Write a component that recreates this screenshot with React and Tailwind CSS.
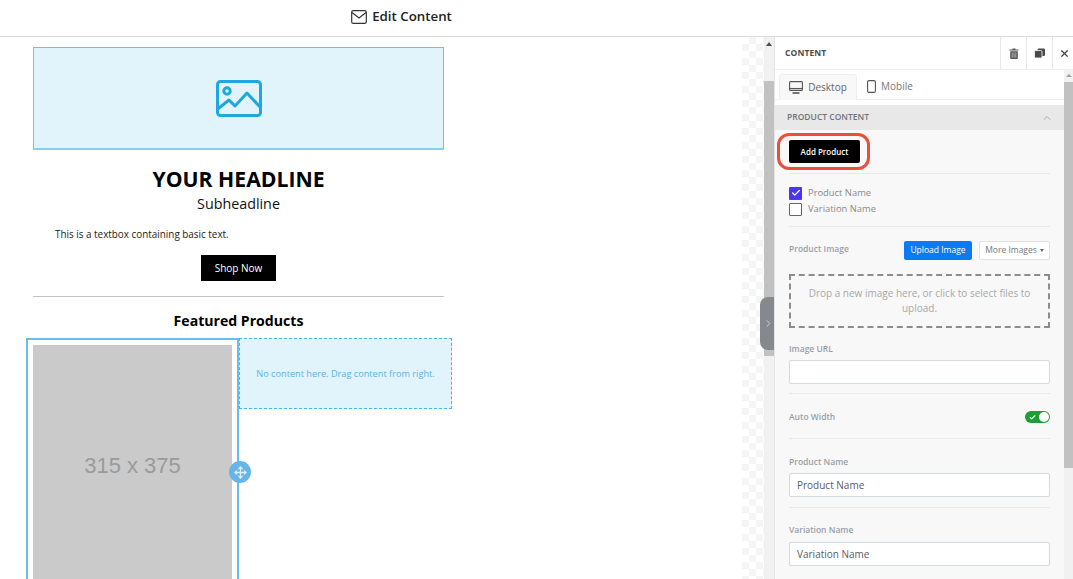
import React from "react";
import { Check, ChevronRight, ChevronUp, X, Move } from "lucide-react";

function Divider({ className = "" }) {
  return <div className={"h-px bg-[#e9e9e9] " + className} />;
}

function Label({ children, className = "" }) {
  return <div className={"text-[8.5px] leading-[12px] font-semibold text-[#9aa0a8] " + className}>{children}</div>;
}

function TextField({ value }) {
  return (
    <div className="h-[24px] bg-white border border-[#d5d9e0] rounded-[2px] px-[7px] flex items-center text-[10px] text-[#5a5a66]">
      {value}
    </div>
  );
}

function Canvas() {
  return (
    <div className="w-[742px] shrink-0 bg-white pt-[10px] pl-[33px] overflow-hidden">
      <div className="w-[411px] flex flex-col">
        <div className="h-[103px] bg-[#e1f3fb] border border-[#6cc3e8] border-b-2 border-b-[#86d0ee] flex items-center justify-center">
          <svg width="46" height="37" viewBox="0 0 46 37" fill="none" stroke="#1fa8de" strokeWidth="3" strokeLinejoin="round" strokeLinecap="round">
            <rect x="1.5" y="1.5" width="43" height="34" rx="3" />
            <circle cx="11" cy="11" r="3.2" />
            <path d="M3 28 L13 20 L19 26 L31 13 L44 27" />
          </svg>
        </div>
        <div className="mt-[14px] text-center text-[21.2px] leading-[30px] font-bold text-black">YOUR HEADLINE</div>
        <div className="text-center text-[14.3px] leading-[20px] text-[#111]">Subheadline</div>
        <div className="mt-[13px] pl-[22px] text-[9.9px] leading-[14px] text-[#222]">This is a textbox containing basic text.</div>
        <div className="mt-[14px] self-center w-[75px] h-[26px] bg-black text-white text-[10px] flex items-center justify-center">Shop Now</div>
        <div className="mt-[15px] h-px bg-[#c4c4c4]" />
        <div className="mt-[14px] text-center text-[14.1px] leading-[20px] font-bold text-black">Featured Products</div>
        <div className="mt-[7px] -ml-[7px] flex items-start w-[426px]">
          <div className="relative w-[213px] h-[260px] shrink-0 border-2 border-[#66bdee] border-b-0 pt-[5px] pl-[5px]">
            <div className="w-[199px] h-[400px] bg-[#cacaca] flex items-center justify-center text-[22px] text-[#9a9a9a] pb-[160px] font-['Liberation_Sans',sans-serif]">315 x 375</div>
            <div className="absolute left-[201px] top-[121px] w-[22px] h-[22px] rounded-full bg-[#66b5e6] flex items-center justify-center">
              <Move size={13} strokeWidth={2.4} color="#d8eefa" />
            </div>
          </div>
          <div className="w-[213px] h-[71px] bg-[#e1f3fb] border border-dashed border-[#3dbbec] flex items-center justify-center text-[9.2px] text-[#5cb4e4]">
            No content here. Drag content from right.
          </div>
        </div>
      </div>
    </div>
  );
}

function Gutter() {
  return (
    <div className="relative w-[32px] shrink-0 flex">
      <div className="w-[22px] bg-[repeating-conic-gradient(#f5f5f5_0_25%,#ffffff_0_50%)] bg-[length:14px_14px]" />
      <div className="w-[10px] bg-[#f1f1f1] flex flex-col">
        <div className="h-[44px] flex justify-center pt-[5px]">
          <svg width="6" height="4" viewBox="0 0 6 4"><path d="M0 4 L3 0 L6 4 Z" fill="#505050" /></svg>
        </div>
        <div className="h-[275px] bg-[#c1c1c1]" />
      </div>
      <div className="absolute left-[18px] top-[260px] w-[14px] h-[53px] bg-[#85888c] rounded-l-[8px] flex items-center justify-center pl-[3px]">
        <ChevronRight size={13} color="#d0d2d5" />
      </div>
    </div>
  );
}

function Panel() {
  return (
    <div className="relative flex-1 min-w-0 border-l border-[#e4e4e4] flex flex-col bg-white">
      <div className="h-[33px] shrink-0 flex items-center border-b border-[#eeeeee]">
        <div className="flex-1 pl-[10px] text-[8.5px] font-bold text-[#4d4d4d] tracking-[0.1px]">CONTENT</div>
        <div className="w-[26px] h-full border-l border-[#e8e8e8] flex items-center justify-center">
          <svg width="10" height="11" viewBox="0 0 10 11">
            <path d="M0.5 1.6H9.5V2.6H0.5Z M3.5 0.4H6.5V1.6H3.5Z" fill="#555" />
            <path d="M1.2 3.2H8.8V10.2Q8.8 11 8 11H2Q1.2 11 1.2 10.2Z" fill="#555" />
            <path d="M3.2 4.4V9.8 M5 4.4V9.8 M6.8 4.4V9.8" stroke="#d5d5d5" strokeWidth="0.7" />
          </svg>
        </div>
        <div className="w-[26px] h-full border-l border-[#e8e8e8] flex items-center justify-center">
          <svg width="11" height="11" viewBox="0 0 11 11"><rect x="3.5" y="0.5" width="7.5" height="7.5" rx="1.2" fill="#4a4a4a" /><rect x="0.5" y="2.5" width="7.5" height="7.5" rx="1.2" fill="#4a4a4a" stroke="#fff" strokeWidth="0.8" /></svg>
        </div>
        <div className="w-[21px] h-full border-l border-[#e8e8e8] flex items-center justify-center pl-[2px]">
          <X size={11} color="#444" strokeWidth={2.6} />
        </div>
      </div>
      <div className="flex-1 flex min-h-0">
        <div className="flex-1 min-w-0 flex flex-col">
          <div className="h-[30px] shrink-0 flex items-end px-[4px] border-b border-[#eeeeee]">
            <div className="w-[78px] h-[26px] -mb-px bg-[#f8f8f8] border border-b-0 border-[#eeeeee] rounded-t-[3px] flex items-center justify-center gap-[5px] text-[10px] text-[#666]">
              <svg width="14" height="13" viewBox="0 0 14 13" fill="none" stroke="#555" strokeWidth="1.1"><rect x="0.6" y="0.6" width="12.8" height="8.8" rx="1" /><path d="M0.6 7.5H13.4" /><path d="M3.5 12H10.5" strokeWidth="1.6" /></svg>
              Desktop
            </div>
            <div className="h-[26px] flex items-center gap-[5px] pl-[10px] text-[10px] text-[#777]">
              <svg width="9" height="13" viewBox="0 0 9 13" fill="none" stroke="#555" strokeWidth="1.1"><rect x="0.6" y="0.6" width="7.8" height="11.8" rx="1.4" /></svg>
              Mobile
            </div>
          </div>
          <div className="h-[5px] shrink-0 bg-white" />
          <div className="flex-1 bg-[#f8f8f8] min-h-0 overflow-hidden">
            <div className="h-[25px] bg-[#e8e8e8] flex items-center justify-between pl-[12px] pr-[11px] text-[8.5px] font-semibold text-[#70747a]">
              PRODUCT CONTENT
              <ChevronUp size={12} color="#aaa" />
            </div>
            <div className="relative px-[14px] pt-[10px]">
              <div className="w-[71px] h-[23px] bg-black text-white text-[8px] font-semibold rounded-[2px] flex items-center justify-center">Add Product</div>
              <div className="absolute left-[2px] top-[3px] w-[93px] h-[37px] border-[3px] border-[#e8503a] rounded-[12px]" />
              <Divider className="mt-[10px]" />
              <div className="mt-[12px] flex items-center gap-[6px] h-[14px] text-[9.4px] text-[#8a8a8a]">
                <div className="w-[13px] h-[13px] bg-[#4a35f0] rounded-[1px] flex items-center justify-center"><Check size={10} color="#fff" strokeWidth={3} /></div>
                Product Name
              </div>
              <div className="mt-[2px] flex items-center gap-[6px] h-[14px] text-[9.4px] text-[#8a8a8a]">
                <div className="w-[13px] h-[13px] bg-white border-[1.5px] border-[#666] rounded-[1px]" />
                Variation Name
              </div>
              <Divider className="mt-[10px]" />
              <div className="mt-[13px] flex items-center h-[20px]">
                <Label className="flex-1 -mt-[2px]">Product Image</Label>
                <div className="w-[68px] h-[19px] bg-[#0a7bf5] text-white text-[8.5px] rounded-[2px] flex items-center justify-center">Upload Image</div>
                <div className="ml-[7px] w-[71px] h-[19px] bg-white border border-[#e2e2e2] rounded-[2px] text-[8.5px] text-[#777] flex items-center justify-center gap-[3px]">
                  More Images
                  <svg width="4" height="3" viewBox="0 0 4 3"><path d="M0 0H4L2 3Z" fill="#666" /></svg>
                </div>
              </div>
              <div className="mt-[14px] h-[54px] border-2 border-dashed border-[#8c8c8c] px-[14px] flex items-center justify-center text-center text-[10px] leading-[15px] text-[#a8a8a8]">
                Drop a new image here, or click to select files to upload.
              </div>
              <Label className="mt-[15px]">Image URL</Label>
              <div className="mt-[5px]"><TextField value="" /></div>
              <Divider className="mt-[9px]" />
              <div className="mt-[17px] h-[12px] flex items-center justify-between">
                <Label>Auto Width</Label>
                <div className="w-[25px] h-[12px] bg-[#1ca035] rounded-full relative flex items-center pl-[4px]">
                  <Check size={7} color="#fff" strokeWidth={4} />
                  <div className="absolute right-[1px] top-[1px] w-[10px] h-[10px] rounded-full bg-white" />
                </div>
              </div>
              <Divider className="mt-[15px]" />
              <Label className="mt-[17px]">Product Name</Label>
              <div className="mt-[5px]"><TextField value="Product Name" /></div>
              <Divider className="mt-[10px]" />
              <Label className="mt-[16px]">Variation Name</Label>
              <div className="mt-[6px]"><TextField value="Variation Name" /></div>
            </div>
          </div>
        </div>
        <div className="w-[9px] shrink-0 bg-[#f1f1f1] flex flex-col">
          <div className="h-[12px] flex justify-center pt-[4px]">
            <svg width="6" height="3" viewBox="0 0 6 3"><path d="M0 3 L3 0 L6 3 Z" fill="#a0a0a0" /></svg>
          </div>
          <div className="h-[386px] bg-[#c1c1c1]" />
        </div>
      </div>
    </div>
  );
}

export default function App() {
  return (
    <div className="w-[1073px] h-[579px] overflow-hidden bg-white flex flex-col font-['Open_Sans',sans-serif]">
      <div className="h-[37px] shrink-0 border-b border-[#dcdcdc] flex items-center justify-center pb-[2px] pr-[270px] gap-[5px] text-[13.3px] font-semibold text-[#222]">
        <svg width="16" height="14" viewBox="0 0 16 14" fill="none" stroke="#333" strokeWidth="1.2" strokeLinejoin="round"><rect x="0.7" y="0.7" width="14.6" height="12.6" rx="1.6" /><path d="M1 2.5 L8 8 L15 2.5" /></svg>
        Edit Content
      </div>
      <div className="flex-1 flex min-h-0">
        <Canvas />
        <Gutter />
        <Panel />
      </div>
    </div>
  );
}
